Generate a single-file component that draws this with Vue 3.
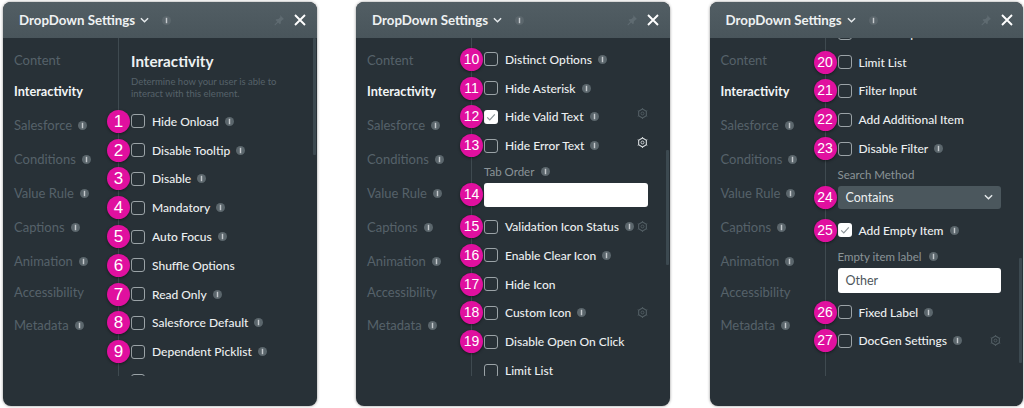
<script setup>
const nav = [
  { name: 'Content', cls: 'short' },
  { name: 'Interactivity', active: true },
  { name: 'Salesforce', info: true },
  { name: 'Conditions', info: true },
  { name: 'Value Rule', info: true },
  { name: 'Captions', info: true },
  { name: 'Animation', info: true },
  { name: 'Accessibility', cls: 'short' },
  { name: 'Metadata', info: true, cls: 'tall' }
]

const panels = [
  {
    id: 'first',
    title: true,
    items: [
      { n: 1, label: 'Hide Onload', info: true },
      { n: 2, label: 'Disable Tooltip', info: true },
      { n: 3, label: 'Disable', info: true },
      { n: 4, label: 'Mandatory', info: true },
      { n: 5, label: 'Auto Focus', info: true },
      { n: 6, label: 'Shuffle Options' },
      { n: 7, label: 'Read Only', info: true },
      { n: 8, label: 'Salesforce Default', info: true },
      { n: 9, label: 'Dependent Picklist', info: true },
      { label: 'Distinct Options', info: true }
    ]
  },
  {
    id: 'second',
    items: [
      { n: 10, label: 'Distinct Options', info: true },
      { n: 11, label: 'Hide Asterisk', info: true },
      { n: 12, label: 'Hide Valid Text', info: true, checked: true, gear: 'dim raised' },
      { n: 13, label: 'Hide Error Text', info: true, gear: 'bright raised' },
      { n: 14, kind: 'input', label: 'Tab Order', fieldInfo: true, value: '' },
      { n: 15, label: 'Validation Icon Status', info: true, gear: 'dim' },
      { n: 16, label: 'Enable Clear Icon', info: true },
      { n: 17, label: 'Hide Icon' },
      { n: 18, label: 'Custom Icon', info: true, gear: 'dim' },
      { n: 19, label: 'Disable Open On Click' },
      { label: 'Limit List' }
    ]
  },
  {
    id: 'third',
    items: [
      { label: 'Disable Open On Click' },
      { n: 20, label: 'Limit List' },
      { n: 21, label: 'Filter Input' },
      { n: 22, label: 'Add Additional Item' },
      { n: 23, label: 'Disable Filter', info: true },
      { n: 24, kind: 'select', label: 'Search Method', value: 'Contains' },
      { n: 25, label: 'Add Empty Item', info: true, checked: true },
      { kind: 'input', label: 'Empty item label', fieldInfo: true, value: 'Other' },
      { n: 26, label: 'Fixed Label', info: true },
      { n: 27, label: 'DocGen Settings', info: true, gear: 'dim' }
    ]
  }
]
</script>

<template>
  <div class="page">
    <section v-for="panel in panels" :key="panel.id" class="panel" :class="panel.id">
      <header class="head">
        <span class="head-title">DropDown Settings</span>
        <svg class="chevron" viewBox="0 0 10 6" width="9" height="6"><path d="M1 1l4 4 4-4" fill="none" stroke="#e6eaec" stroke-width="1.6" /></svg>
        <svg class="info head-info" viewBox="0 0 10 10"><circle cx="5" cy="5" r="5" /><rect x="4.2" y="2" width="1.6" height="6" /></svg>
        <svg class="pin" viewBox="0 0 14 14" width="12" height="12">
          <path d="M8.2 1.2l4.6 4.6-1.2.5-2.4 2.3-.2 2.6-1 .8-2-2-3.6 3.4-.8-.8 3.4-3.6-2-2 .8-1 2.6-.2 2.3-2.4z" fill="#5f6b71" />
        </svg>
        <svg class="close" viewBox="0 0 12 12" width="12" height="12"><path d="M1 1l10 10M11 1L1 11" stroke="#fff" stroke-width="1.9" fill="none" /></svg>
      </header>

      <div class="body">
        <nav class="side">
          <div v-for="item in nav" :key="item.name" class="nav-item" :class="[item.cls, { active: item.active }]">
            {{ item.name }}
            <svg v-if="item.info" class="info" viewBox="0 0 10 10"><circle cx="5" cy="5" r="5" /><rect x="4.2" y="2" width="1.6" height="6" /></svg>
          </div>
        </nav>

        <div class="main">
          <div v-if="panel.title" class="intro">
            <h3>Interactivity</h3>
            <p>Determine how your user is able to interact with this element.</p>
          </div>

          <template v-for="item in panel.items" :key="item.label">
            <div v-if="item.kind" class="field" :class="item.kind">
              <span v-if="item.n" class="badge">{{ item.n }}</span>
              <div class="field-label">
                {{ item.label }}
                <svg v-if="item.fieldInfo" class="info" viewBox="0 0 10 10"><circle cx="5" cy="5" r="5" /><rect x="4.2" y="2" width="1.6" height="6" /></svg>
              </div>
              <div class="control">
                {{ item.value }}
                <svg v-if="item.kind === 'select'" viewBox="0 0 10 6" width="9" height="6"><path d="M1 1l4 4 4-4" fill="none" stroke="#e6eaec" stroke-width="1.6" /></svg>
              </div>
            </div>

            <div v-else class="row">
              <span v-if="item.n" class="badge" :class="{ single: item.n < 10 }">{{ item.n }}</span>
              <span class="box" :class="{ checked: item.checked }">
                <svg v-if="item.checked" viewBox="0 0 14 14" width="14" height="14"><path d="M3.2 7.4l2.6 2.6 5-5.6" fill="none" stroke="#8b9498" stroke-width="1.2" /></svg>
              </span>
              <span class="label">{{ item.label }}</span>
              <svg v-if="item.info" class="info" viewBox="0 0 10 10"><circle cx="5" cy="5" r="5" /><rect x="4.2" y="2" width="1.6" height="6" /></svg>
              <svg v-if="item.gear" class="gear" :class="item.gear" viewBox="0 0 12 12" width="11" height="11">
                <path d="M6 1.2l4.2 2.4v4.8L6 10.8 1.8 8.4V3.6z" fill="none" stroke="currentColor" stroke-width="1.2" stroke-linejoin="round" />
                <path d="M6 0v1.2M11.2 3l-1 .6M11.2 9l-1-.6M6 12v-1.2M.8 9l1-.6M.8 3l1 .6" stroke="currentColor" stroke-width="1" />
                <circle cx="6" cy="6" r="1.6" fill="none" stroke="currentColor" stroke-width="1" />
              </svg>
            </div>
          </template>
        </div>
      </div>
      <span class="scrollbar"></span>
    </section>
  </div>
</template>

<style scoped>
.page {
  display: flex;
  gap: 39px;
  width: 1024px;
  height: 408px;
  padding: 2px 0 0 3px;
  box-sizing: border-box;
  background: #fff;
  overflow: hidden;
  font-family: Lato, "Open Sans", sans-serif;
}

.panel {
  position: relative;
  flex: none;
  width: 314px;
  height: 404px;
  border-radius: 8px;
  background: #283137;
  box-shadow: 0 0 3px rgba(0, 0, 0, 0.45);
  overflow: hidden;
}

.third {
  margin-left: 0.5px;
  width: 313.5px;
}

.head {
  display: flex;
  align-items: center;
  height: 36px;
  padding-left: 16px;
  box-sizing: border-box;
  background: linear-gradient(#525e64, #49555b);
}

.head-title {
  font-size: 13.3px;
  font-weight: 700;
  color: #eef1f2;
}

.chevron {
  margin-left: 5px;
}

.head-info {
  margin-left: 13px;
}

.pin {
  margin-left: auto;
}

.close {
  margin: 0 11px 0 9px;
}

.third .close {
  margin-right: 10.5px;
}

.body {
  display: flex;
  height: 338px;
  overflow: hidden;
}

.side {
  flex: none;
  width: 116px;
  padding: 8px 0 0 11px;
  box-sizing: border-box;
  border-right: 1px solid #3f4a50;
}

.nav-item {
  display: flex;
  align-items: center;
  gap: 6px;
  height: 34px;
  font-size: 13px;
  color: #56626a;
}

.nav-item.short {
  height: 28px;
}

.nav-item.tall {
  height: 38px;
}

.nav-item.active {
  color: #f2f5f6;
  font-weight: 700;
  font-size: 12.7px;
}

.main {
  flex: 1;
  min-width: 0;
  padding: 0 22px 0 12px;
}

.first .main {
  padding-top: 13px;
}

.second .main {
  padding-top: 7px;
}

.third .main {
  margin-top: -19px;
}

.intro {
  margin-bottom: 8px;
}

.intro h3 {
  margin: 0 0 5px;
  font-size: 15.2px;
  line-height: 20px;
  font-weight: 700;
  color: #eef1f2;
}

.intro p {
  margin: 0;
  font-size: 9.5px;
  line-height: 11.5px;
  color: #56626a;
}

.row {
  position: relative;
  display: flex;
  align-items: center;
  height: 28.8px;
}

.badge {
  position: absolute;
  left: -24px;
  top: 50%;
  z-index: 2;
  width: 23px;
  height: 23px;
  margin-top: -11.5px;
  border-radius: 50%;
  background: #e0109f;
  box-shadow: 0 1px 3px rgba(0, 0, 0, 0.45);
  color: #fff;
  font-family: "Liberation Sans", sans-serif;
  font-size: 14px;
  line-height: 23px;
  text-align: center;
}

.badge.single {
  font-size: 17px;
}

.box {
  flex: none;
  width: 14px;
  height: 14px;
  margin-right: 7px;
  border: 1px solid #9ba3a7;
  border-radius: 3px;
  box-sizing: border-box;
}

.box.checked {
  border: 0;
  background: #fff;
}

.box svg {
  display: block;
}

.label {
  font-size: 12px;
  font-weight: 500;
  color: #eceff0;
}

.info {
  flex: none;
  width: 9px;
  height: 9px;
  fill: #5b666c;
}

.info rect {
  fill: #c5cacd;
}

.row .info {
  margin-left: 6px;
}

.gear {
  margin-left: auto;
}

.gear.raised {
  margin-top: -6px;
}

.gear.dim {
  color: #515d63;
}

.gear.bright {
  color: #d5dadc;
}

.field {
  position: relative;
}

.field-label {
  display: flex;
  align-items: center;
  gap: 7px;
  height: 23px;
  font-size: 11.5px;
  color: #8b9498;
}

.field .badge {
  top: 34.5px;
}

.control {
  display: flex;
  align-items: center;
  justify-content: space-between;
  height: 24px;
  padding: 0 8px;
  box-sizing: border-box;
  border-radius: 3px;
  background: #fff;
  color: #4d565b;
  font-size: 12.5px;
  margin-bottom: 5px;
}

.third .control {
  height: 25px;
}

.select .control,
.third .select .control {
  height: 23px;
  background: #4b575d;
  color: #eceff0;
  margin-bottom: 7px;
}

.scrollbar {
  position: absolute;
  right: 1px;
  width: 3px;
  background: #3c4950;
  border-radius: 1px;
}

.first .scrollbar {
  top: 36px;
  height: 117px;
}

.second .scrollbar {
  top: 148px;
  height: 115px;
}

.third .scrollbar {
  top: 256px;
  height: 105px;
}
</style>
